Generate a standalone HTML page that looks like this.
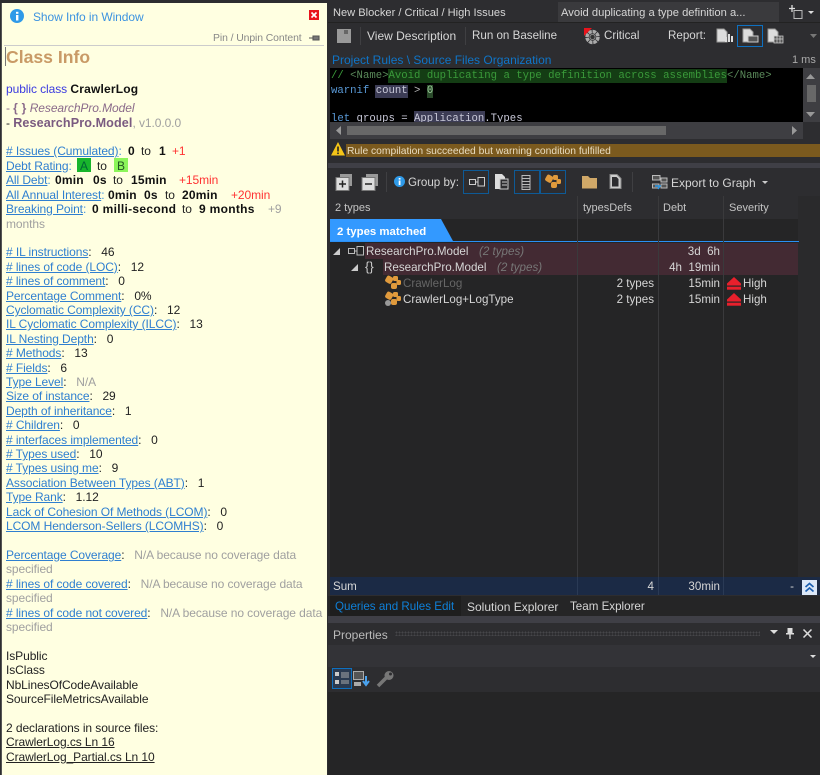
<!DOCTYPE html>
<html><head><meta charset="utf-8">
<style>
html,body{margin:0;padding:0;background:#2d2d30;width:820px;height:775px;overflow:hidden}
body{position:relative;font-family:"Liberation Sans",sans-serif;font-size:12px}
.a{position:absolute;white-space:nowrap}
#L{position:absolute;left:1px;top:3px;width:326px;height:772px;background:#ffffe1;border-left:1px solid #555;box-sizing:border-box}
.t{position:absolute;left:6px;white-space:pre;font-size:12px;line-height:14px;color:#222;letter-spacing:-.08px;filter:blur(.3px)}
#L2{position:absolute;left:0;top:0}
.t a{color:#2f7fd0;text-decoration:underline}
.t b{color:#111;letter-spacing:.2px}
.g{color:#a0a0a0}.r{color:#f33}
.w{position:absolute;white-space:pre;color:#d6d6d6;font-size:11.6px;line-height:14px;filter:blur(.3px)}
.m{position:absolute;white-space:pre;font-family:"Liberation Mono",monospace;font-size:10.65px;line-height:14px;filter:blur(.3px)}
.R{position:absolute}
svg{position:absolute;overflow:visible}
</style></head><body>
<div id="L"></div>
<div id="L2">
<svg style="left:10px;top:9px" width="15" height="15"><circle cx="7" cy="7" r="7" fill="#2f9ae8"/><rect x="6" y="6" width="2.4" height="5.5" fill="#fff"/><rect x="6" y="2.8" width="2.4" height="2" fill="#fff"/></svg>
<div class="t" style="left:33px;top:10px;color:#3d93e0">Show Info in Window</div>
<svg style="left:309px;top:10px" width="10" height="10"><rect width="10" height="10" fill="#e8141c"/><path d="M2.5 2.5L7.5 7.5M7.5 2.5L2.5 7.5" stroke="#fff" stroke-width="1.6"/></svg>
<div class="t" style="left:213px;top:32px;font-size:10.4px;color:#888">Pin / Unpin Content</div>
<svg style="left:309px;top:35px" width="11" height="7"><path d="M0 3H4M4 .5V5.5M4 1H10V5H4" stroke="#555" stroke-width="1.1" fill="#777"/></svg>
<div class="R" style="left:4px;top:45px;width:320px;height:1px;background:#ccc"></div>
<div class="R" style="left:5px;top:47px;width:1px;height:19px;background:#777"></div>
<div class="t" style="left:6px;top:47px;font-size:17.6px;line-height:20px;font-weight:bold;color:#c99a66;letter-spacing:0">Class Info</div>
<div class="t" style="top:82px;color:#3a3ae0">public class <b>CrawlerLog</b></div>
<div class="t" style="top:101px;color:#8a6a8a">- <b style="color:#8a6a8a">{ }</b> <i>ResearchPro.Model</i></div>
<div class="t" style="top:116px;color:#8a6a8a"><span style="color:#222">-</span> <b style="color:#7a5a80;font-size:12.6px;letter-spacing:.1px">ResearchPro.Model</b><span class="g">, v1.0.0.0</span></div>

<div class="t" style="top:144px"><a># Issues (Cumulated)</a><span style="color:#3d93e0">:</span></div>
<div class="t" style="left:128px;top:144px"><b>0</b></div><div class="t" style="left:141px;top:144px">to</div><div class="t" style="left:159px;top:144px"><b>1</b></div><div class="t r" style="left:172px;top:144px">+1</div>

<div class="t" style="top:159px"><a>Debt Rating</a><span style="color:#3d93e0">:</span></div>
<div class="R" style="left:77px;top:158px;width:14px;height:14px;background:#18b52c"></div>
<div class="t" style="left:80px;top:159px;color:#063">A</div>
<div class="t" style="left:97px;top:159px">to</div>
<div class="R" style="left:114px;top:158px;width:14px;height:14px;background:#8cf55a"></div>
<div class="t" style="left:117px;top:159px;color:#252">B</div>

<div class="t" style="top:173px"><a>All Debt</a><span style="color:#3d93e0">:</span></div>
<div class="t" style="left:55px;top:173px"><b>0min</b></div><div class="t" style="left:93px;top:173px"><b>0s</b></div><div class="t" style="left:113px;top:173px">to</div><div class="t" style="left:131px;top:173px"><b>15min</b></div><div class="t r" style="left:179px;top:173px">+15min</div>

<div class="t" style="top:188px"><a>All Annual Interest</a><span style="color:#3d93e0">:</span></div>
<div class="t" style="left:108px;top:188px"><b>0min</b></div><div class="t" style="left:144px;top:188px"><b>0s</b></div><div class="t" style="left:165px;top:188px">to</div><div class="t" style="left:182px;top:188px"><b>20min</b></div><div class="t r" style="left:231px;top:188px">+20min</div>

<div class="t" style="top:202px"><a>Breaking Point</a><span style="color:#3d93e0">:</span></div>
<div class="t" style="left:92px;top:202px"><b style="letter-spacing:.3px">0 milli-second</b></div><div class="t" style="left:182px;top:202px">to</div><div class="t" style="left:199px;top:202px"><b style="letter-spacing:.3px">9 months</b></div><div class="t g" style="left:268px;top:202px">+9</div>
<div class="t g" style="top:217px">months</div>

<div class="t" style="top:245px"><a># IL instructions</a>:   46</div>
<div class="t" style="top:260px"><a># lines of code (LOC)</a>:   12</div>
<div class="t" style="top:274px"><a># lines of comment</a>:   0</div>
<div class="t" style="top:289px"><a>Percentage Comment</a>:   0%</div>
<div class="t" style="top:303px"><a>Cyclomatic Complexity (CC)</a>:   12</div>
<div class="t" style="top:317px"><a>IL Cyclomatic Complexity (ILCC)</a>:   13</div>
<div class="t" style="top:332px"><a>IL Nesting Depth</a>:   0</div>
<div class="t" style="top:346px"><a># Methods</a>:   13</div>
<div class="t" style="top:361px"><a># Fields</a>:   6</div>
<div class="t" style="top:375px"><a>Type Level</a>:   <span class="g">N/A</span></div>
<div class="t" style="top:389px"><a>Size of instance</a>:   29</div>
<div class="t" style="top:404px"><a>Depth of inheritance</a>:   1</div>
<div class="t" style="top:418px"><a># Children</a>:   0</div>
<div class="t" style="top:433px"><a># interfaces implemented</a>:   0</div>
<div class="t" style="top:447px"><a># Types used</a>:   10</div>
<div class="t" style="top:461px"><a># Types using me</a>:   9</div>
<div class="t" style="top:476px"><a>Association Between Types (ABT)</a>:   1</div>
<div class="t" style="top:490px"><a>Type Rank</a>:   1.12</div>
<div class="t" style="top:505px"><a>Lack of Cohesion Of Methods (LCOM)</a>:   0</div>
<div class="t" style="top:519px"><a>LCOM Henderson-Sellers (LCOMHS)</a>:   0</div>
<div class="t" style="top:548px"><a>Percentage Coverage</a>:   <span class="g">N/A because no coverage data</span></div>
<div class="t g" style="top:562px">specified</div>
<div class="t" style="top:577px"><a># lines of code covered</a>:   <span class="g">N/A because no coverage data</span></div>
<div class="t g" style="top:591px">specified</div>
<div class="t" style="top:606px"><a># lines of code not covered</a>:   <span class="g">N/A because no coverage data</span></div>
<div class="t g" style="top:620px">specified</div>
<div class="t" style="top:649px">IsPublic</div>
<div class="t" style="top:663px">IsClass</div>
<div class="t" style="top:678px">NbLinesOfCodeAvailable</div>
<div class="t" style="top:692px">SourceFileMetricsAvailable</div>
<div class="t" style="top:721px">2 declarations in source files:</div>
<div class="t" style="top:735px"><u>CrawlerLog.cs Ln 16</u></div>
<div class="t" style="top:750px"><u>CrawlerLog_Partial.cs Ln 10</u></div>
</div>

<!-- Right -->
<div class="R" style="left:328px;top:0;width:492px;height:775px;background:#2d2d30"></div>
<div class="R" style="left:558px;top:2px;width:221px;height:20px;background:#3a3a3d"></div>
<div class="w" style="left:333px;top:6px;font-size:11.1px">New Blocker / Critical / High Issues</div>
<div class="w" style="left:561px;top:6px;font-size:11.2px">Avoid duplicating a type definition a...</div>
<svg style="left:788px;top:5px" width="26" height="15"><path d="M4 0V7M1 3.5H7" stroke="#ddd" stroke-width="1.3"/><rect x="6" y="5.5" width="8" height="8" fill="none" stroke="#bbb"/><path d="M20 6H26L23 9Z" fill="#ddd"/></svg>
<div class="R" style="left:328px;top:22px;width:492px;height:1px;background:#222"></div>
<svg style="left:337px;top:29px" width="15" height="15"><path d="M0 0H14V14H0Z" fill="#999"/><rect x="7" y="1" width="4" height="4" fill="#666"/></svg>
<div class="R" style="left:360px;top:27px;width:1px;height:18px;background:#3f3f42"></div>
<div class="w" style="left:367px;top:29px;font-size:12px">View Description</div>
<div class="R" style="left:465px;top:27px;width:1px;height:18px;background:#3f3f42"></div>
<div class="w" style="left:472px;top:29px">Run on Baseline</div>
<svg style="left:584px;top:28px" width="17" height="17"><circle cx="8.5" cy="9" r="5.5" fill="none" stroke="#aaa" stroke-width="3.5" stroke-dasharray="3.5 .8"/><circle cx="8.5" cy="9" r="2.6" fill="#333" stroke="#888"/><path d="M0 0H8L0 8Z" fill="#e8141c"/></svg>
<div class="w" style="left:604px;top:29px">Critical</div>
<div class="w" style="left:668px;top:29px">Report:</div>
<svg style="left:716px;top:28px" width="17" height="16"><path d="M1 1H8L11 4V14H1Z" fill="#ddd" stroke="#999"/><path d="M10 14V9M13 14V6M16 14V8" stroke="#ddd" stroke-width="2"/></svg>
<div class="R" style="left:737px;top:25px;width:26px;height:22px;border:1px solid #0e70c0;box-sizing:border-box"></div>
<svg style="left:742px;top:28px" width="17" height="16"><path d="M1 1H8L11 4V14H1Z" fill="#ddd" stroke="#999"/><rect x="6" y="8" width="10" height="6" fill="#555" stroke="#ccc"/></svg>
<svg style="left:767px;top:28px" width="17" height="16"><path d="M1 1H8L11 4V14H1Z" fill="#ddd" stroke="#999"/><path d="M7 8H16V15H7ZM10 8V15M13 8V15M7 11H16" fill="#555" stroke="#ccc" stroke-width=".8"/></svg>
<svg style="left:810px;top:34px" width="7" height="4"><path d="M0 0H7L3.5 4Z" fill="#777"/></svg>
<div class="w" style="left:332px;top:53px;color:#0f75c8;font-size:12px">Project Rules \ Source Files Organization</div>
<div class="w" style="left:792px;top:53px;color:#aaa;font-size:11px">1 ms</div>

<div class="R" style="left:330px;top:68px;width:473px;height:54px;background:#000;overflow:hidden">
<div class="R" style="left:58px;top:1px;width:339px;height:14px;background:#143d14"></div>
<div class="R" style="left:45px;top:17px;width:33px;height:13px;background:#3c3c55"></div>
<div class="R" style="left:97px;top:17px;width:6px;height:13px;background:#2a4a2a"></div>
<div class="R" style="left:84px;top:43px;width:71px;height:14px;background:#3c3c55"></div>
<div class="m" style="left:1px;top:1px;color:#3a9a3a">// <span style="color:#5a8a5a">&lt;Name&gt;</span>Avoid duplicating a type definition across assemblies<span style="color:#5a8a5a">&lt;/Name&gt;</span></div>
<div class="m" style="left:1px;top:16px;color:#5a9ad8">warnif <span style="color:#c8c8d8">count</span> <span style="color:#bbb">&gt;</span> <span style="color:#9aca9a">0</span></div>
<div class="m" style="left:1px;top:44px;color:#c8c8d8"><span style="color:#5a9ad8">let</span> groups = Application.Types</div>
</div>
<div class="R" style="left:803px;top:68px;width:17px;height:54px;background:#3e3e42"></div>
<svg style="left:806px;top:74px" width="10" height="6"><path d="M0 5H9L4.5 0Z" fill="#999"/></svg>
<div class="R" style="left:807px;top:85px;width:9px;height:17px;background:#686868"></div>
<svg style="left:806px;top:112px" width="10" height="6"><path d="M0 0H9L4.5 5Z" fill="#999"/></svg>
<div class="R" style="left:330px;top:122px;width:473px;height:17px;background:#3e3e42"></div>
<div class="R" style="left:347px;top:126px;width:319px;height:9px;background:#686868"></div>
<svg style="left:336px;top:126px" width="6" height="9"><path d="M5 0V9L0 4.5Z" fill="#999"/></svg>
<svg style="left:792px;top:126px" width="6" height="9"><path d="M0 0V9L5 4.5Z" fill="#999"/></svg>

<div class="R" style="left:346px;top:144px;width:474px;height:13px;background:#7b5a1e"></div>
<svg style="left:331px;top:142px" width="14" height="14"><path d="M7 0L14 13.5H0Z" fill="#f5c518"/><rect x="6.2" y="4.5" width="1.6" height="5" fill="#222"/><rect x="6.2" y="10.5" width="1.6" height="1.6" fill="#222"/></svg>
<div class="w" style="left:347px;top:145px;font-size:10.3px;color:#e8dcc0">Rule compilation succeeded but warning condition fulfilled</div>
<div class="R" style="left:328px;top:163px;width:492px;height:5px;background:#3f3f46"></div>

<svg style="left:336px;top:174px" width="17" height="17"><rect x="4" y="0" width="12" height="12" fill="#999"/><rect x="0" y="3.5" width="13" height="13" fill="#ddd" stroke="#777"/><path d="M6.5 6.5V13.5M3 10H10" stroke="#222" stroke-width="1.5"/></svg>
<svg style="left:362px;top:174px" width="17" height="17"><rect x="4" y="0" width="12" height="12" fill="#999"/><rect x="0" y="3.5" width="13" height="13" fill="#ddd" stroke="#777"/><path d="M3 10H10" stroke="#222" stroke-width="1.5"/></svg>
<div class="R" style="left:386px;top:172px;width:1px;height:20px;background:#3f3f42"></div>
<svg style="left:394px;top:176px" width="11" height="11"><circle cx="5.5" cy="5.5" r="5.5" fill="#2f9ae8"/><rect x="4.7" y="4.5" width="1.8" height="4.5" fill="#fff"/><rect x="4.7" y="2" width="1.8" height="1.6" fill="#fff"/></svg>
<div class="w" style="left:408px;top:176px">Group by:</div>
<div class="R" style="left:463px;top:170px;width:26px;height:24px;border:1px solid #0e5a96;box-sizing:border-box"></div>
<svg style="left:469px;top:177px" width="16" height="10"><rect x=".5" y="2.5" width="6" height="5" fill="none" stroke="#ccc"/><rect x="9" y=".5" width="6.5" height="8.5" fill="none" stroke="#ccc"/><path d="M6 5H9" stroke="#ccc"/></svg>
<svg style="left:494px;top:174px" width="15" height="16"><path d="M1 0H8L11 3V15H1Z" fill="#ddd"/><path d="M6 5H14V15H6Z" fill="#2d2d30" stroke="#ccc"/><path d="M8 8H13M8 11H13" stroke="#ccc"/></svg>
<div class="R" style="left:514px;top:170px;width:26px;height:24px;border:1px solid #0e5a96;box-sizing:border-box"></div>
<svg style="left:521px;top:175px" width="12" height="15"><path d="M1 .5H9V14.5H1ZM1 3.5H9M1 6.5H9M1 9.5H9M1 12H9" fill="none" stroke="#bbb"/></svg>
<div class="R" style="left:540px;top:170px;width:26px;height:24px;border:1px solid #0e5a96;box-sizing:border-box"></div>
<svg style="left:545px;top:174px" width="16" height="15"><g fill="#e09a3c"><rect x="1" y="1" width="7" height="7" rx="2" transform="rotate(30 4 4)"/><rect x="8" y="1" width="5" height="5" rx="1.5"/><rect x="6" y="8" width="6" height="6" rx="2"/><rect x="11.5" y="5" width="4.5" height="5" rx="1.5"/></g></svg>
<svg style="left:582px;top:175px" width="16" height="14"><path d="M0 1H6L8 3H15V13.5H0Z" fill="#d0a868"/></svg>
<svg style="left:609px;top:174px" width="14" height="15"><path d="M1 .5H8L12 4.5V14.5H1Z" fill="#ccc" stroke="#888"/><path d="M3 3H7.5L9.5 5V12.5H3Z" fill="#2d2d30"/></svg>
<div class="R" style="left:632px;top:172px;width:1px;height:20px;background:#3f3f42"></div>
<svg style="left:652px;top:175px" width="16" height="15"><path d="M.5 .5H8V5H.5ZM.5 9H7V13H.5ZM9 3H15V7H9ZM9 9H15V13H9Z" fill="#555" stroke="#bbb"/><path d="M3 11H8L6 14M8 11" stroke="#2f9ae8" stroke-width="1.5" fill="none"/></svg>
<div class="w" style="left:671px;top:176px;font-size:12px">Export to Graph</div>
<svg style="left:762px;top:181px" width="6" height="3"><path d="M0 0H6L3 3Z" fill="#ccc"/></svg>

<!-- grid -->
<div class="R" style="left:330px;top:196px;width:468px;height:381px;background:#252526"></div>
<div class="R" style="left:798px;top:196px;width:22px;height:381px;background:#2a2a2c"></div>
<div class="R" style="left:330px;top:196px;width:468px;height:23px;background:#2d2d30"></div>
<div class="w" style="left:335px;top:201px;font-size:11px;color:#c4c4c4">2 types</div>
<div class="w" style="left:583px;top:201px;font-size:11px;color:#c4c4c4">typesDefs</div>
<div class="w" style="left:663px;top:201px;font-size:11px;color:#c4c4c4">Debt</div>
<div class="w" style="left:729px;top:201px;font-size:11px;color:#c4c4c4">Severity</div>
<svg style="left:330px;top:219px" width="123" height="22"><path d="M0 0H111L123 22H0Z" fill="#3399ff"/></svg>
<div class="w" style="left:337px;top:225px;color:#fff;font-weight:bold;font-size:11.4px">2 types matched</div>
<div class="R" style="left:330px;top:241px;width:469px;height:1px;background:#2a90f5"></div>
<div class="R" style="left:365px;top:243px;width:433px;height:16px;background:#432a33"></div>
<div class="R" style="left:383px;top:259px;width:415px;height:16px;background:#432a33"></div>
<div class="R" style="left:577px;top:196px;width:1px;height:381px;background:#3a3a3c"></div>
<div class="R" style="left:658px;top:196px;width:1px;height:381px;background:#3a3a3c"></div>
<div class="R" style="left:723px;top:196px;width:1px;height:381px;background:#3a3a3c"></div>
<svg style="left:333px;top:248px" width="7" height="7"><path d="M7 0V7H0Z" fill="#ccc"/></svg>
<svg style="left:351px;top:264px" width="7" height="7"><path d="M7 0V7H0Z" fill="#ccc"/></svg>
<svg style="left:348px;top:246px" width="16" height="10"><rect x=".5" y="2.5" width="6" height="5" fill="none" stroke="#bbb"/><rect x="9" y=".5" width="6.5" height="8.5" fill="none" stroke="#bbb"/><path d="M6 5H9" stroke="#bbb"/></svg>
<div class="w" style="left:366px;top:245px">ResearchPro.Model</div>
<div class="w" style="left:479px;top:245px;color:#777;font-style:italic">(2 types)</div>
<div class="w" style="left:365px;top:260px;color:#ccc;font-size:13px">{}</div>
<div class="w" style="left:384px;top:261px">ResearchPro.Model</div>
<div class="w" style="left:497px;top:261px;color:#777;font-style:italic">(2 types)</div>
<div class="w" style="right:100px;top:245px">3d  6h</div>
<div class="w" style="right:100px;top:261px">4h  19min</div>
<svg style="left:385px;top:275px" width="16" height="15"><g fill="#e09a3c"><rect x="1" y="1" width="7" height="7" rx="2" transform="rotate(30 4 4)"/><rect x="8" y="1" width="5" height="5" rx="1.5"/><rect x="6" y="8" width="6" height="6" rx="2"/><rect x="11.5" y="5" width="4.5" height="5" rx="1.5"/></g></svg>
<svg style="left:385px;top:291px" width="16" height="16"><g fill="#e09a3c"><rect x="1" y="1" width="7" height="7" rx="2" transform="rotate(30 4 4)"/><rect x="8" y="1" width="5" height="5" rx="1.5"/><rect x="6" y="8" width="6" height="6" rx="2"/><rect x="11.5" y="5" width="4.5" height="5" rx="1.5"/></g><circle cx="3" cy="12" r="3" fill="#999"/></svg>
<div class="w" style="left:403px;top:277px;color:#666">CrawlerLog</div>
<div class="w" style="left:403px;top:293px">CrawlerLog+LogType</div>
<div class="w" style="right:166px;top:277px">2 types</div>
<div class="w" style="right:166px;top:293px">2 types</div>
<div class="w" style="right:100px;top:277px">15min</div>
<div class="w" style="right:100px;top:293px">15min</div>
<svg style="left:727px;top:277px" width="14" height="13"><path d="M7 0L14 6.5V8.5H0V6.5Z" fill="#e8202c"/><rect x="0" y="9.7" width="14" height="3" fill="#e8202c"/></svg>
<svg style="left:727px;top:293px" width="14" height="13"><path d="M7 0L14 6.5V8.5H0V6.5Z" fill="#e8202c"/><rect x="0" y="9.7" width="14" height="3" fill="#e8202c"/></svg>
<div class="w" style="left:743px;top:277px">High</div>
<div class="w" style="left:743px;top:293px">High</div>

<div class="R" style="left:330px;top:577px;width:490px;height:18px;background:#1b2a45"></div>
<div class="R" style="left:577px;top:577px;width:1px;height:18px;background:#2a3a55"></div>
<div class="R" style="left:658px;top:577px;width:1px;height:18px;background:#2a3a55"></div>
<div class="R" style="left:723px;top:577px;width:1px;height:18px;background:#2a3a55"></div>
<div class="w" style="left:333px;top:580px">Sum</div>
<div class="w" style="right:166px;top:580px">4</div>
<div class="w" style="right:100px;top:580px">30min</div>
<div class="w" style="right:26px;top:580px">-</div>
<div class="R" style="left:802px;top:580px;width:15px;height:15px;background:#dce8f8"></div>
<svg style="left:804px;top:582px" width="11" height="11"><path d="M1.5 5L5.5 1.5L9.5 5M1.5 9.5L5.5 6L9.5 9.5" stroke="#1c5fb0" stroke-width="1.7" fill="none"/></svg>

<div class="R" style="left:328px;top:596px;width:492px;height:20px;background:#252526"></div>
<div class="R" style="left:330px;top:596px;width:131px;height:20px;background:#1e1e1e"></div>
<div class="w" style="left:335px;top:600px;color:#0f80d8">Queries and Rules Edit</div>
<div class="w" style="left:467px;top:600px;font-size:12px">Solution Explorer</div>
<div class="w" style="left:570px;top:600px">Team Explorer</div>
<div class="R" style="left:328px;top:616px;width:492px;height:7px;background:#3f3f46"></div>
<div class="R" style="left:328px;top:623px;width:492px;height:22px;background:#2d2d30"></div>
<div class="R" style="left:395px;top:631px;width:365px;height:5px;background-image:radial-gradient(#46464a 40%,transparent 45%);background-size:3px 3px"></div>
<div class="w" style="left:333px;top:628px;color:#bbb;font-size:12px">Properties</div>
<svg style="left:770px;top:630px" width="8" height="4"><path d="M0 0H8L4 4Z" fill="#ddd"/></svg>
<svg style="left:786px;top:628px" width="8" height="11"><path d="M1.5 0H6.5V5H8V6.5H4.7V11H3.3V6.5H0V5H1.5Z" fill="#ddd"/></svg>
<svg style="left:803px;top:629px" width="9" height="9"><path d="M.5 .5L8.5 8.5M8.5 .5L.5 8.5" stroke="#ddd" stroke-width="1.5"/></svg>
<div class="R" style="left:328px;top:645px;width:492px;height:22px;background:#333337"></div>
<svg style="left:810px;top:655px" width="6" height="3"><path d="M0 0H6L3 3Z" fill="#ddd"/></svg>
<div class="R" style="left:328px;top:667px;width:492px;height:25px;background:#2d2d30"></div>
<div class="R" style="left:328px;top:692px;width:492px;height:83px;background:#252526"></div>
<div class="R" style="left:332px;top:668px;width:20px;height:21px;border:1px solid #0e70c0;background:#2a3a50;box-sizing:border-box"></div>
<svg style="left:335px;top:672px" width="15" height="14"><path d="M0 0H4V4H0ZM0 8H4V12H0Z" fill="#ccc"/><path d="M6 1H14M6 3H14M6 5H14M6 9H14M6 11H14" stroke="#aaa"/></svg>
<svg style="left:353px;top:671px" width="17" height="16"><rect x=".5" y=".5" width="10" height="8" fill="#555" stroke="#aaa"/><path d="M1 11H8V15H1Z" fill="#aaa"/><path d="M13 5V12M10 10L13 14L16 10" stroke="#4aa3f0" stroke-width="2" fill="none"/></svg>
<svg style="left:377px;top:671px" width="17" height="16"><path d="M1 15L9 7" stroke="#777" stroke-width="3.5"/><circle cx="12" cy="4.5" r="4.5" fill="#777"/><circle cx="13.5" cy="3" r="1.5" fill="#2d2d30"/></svg>
</body></html>
